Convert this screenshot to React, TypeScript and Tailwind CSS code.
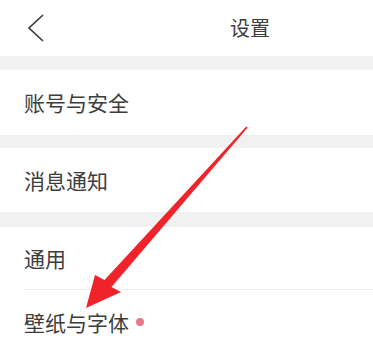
import React from "react";

const font = { fontFamily: '"Noto Sans CJK SC", "Noto Sans", sans-serif' };

function Row({ label, h, dot }: { label: string; h: string; dot?: boolean }) {
  return (
    <div className={`flex items-center bg-white pl-[24px] ${h}`}>
      <span className="text-[21px] font-normal leading-none text-[#3d3d3d]">{label}</span>
      {dot && <span className="ml-[7px] h-[8px] w-[8px] rounded-full bg-[#e8798b]" />}
    </div>
  );
}

export default function App() {
  return (
    <div className="relative h-[343px] w-[373px] overflow-hidden bg-white" style={font}>
      <div className="flex h-[56px] items-center bg-white">
        <svg className="ml-[26px]" width="20" height="30" viewBox="0 0 20 30">
          <path d="M17 2 L3 15 L17 28" fill="none" stroke="#3a3a3a" strokeWidth="1.7" />
        </svg>
        <span className="ml-auto mr-[103px] text-[20px] font-normal leading-none text-[#3d3d3d]">设置</span>
      </div>
      <div className="h-[14px] bg-[#f1f1f1]" />
      <Row label="账号与安全" h="h-[65px]" />
      <div className="h-[13px] bg-[#f1f1f1]" />
      <Row label="消息通知" h="h-[64px]" />
      <div className="h-[15px] bg-[#f1f1f1]" />
      <Row label="通用" h="h-[62px]" />
      <div className="ml-[24px] h-px bg-[#ececec]" />
      <Row label="壁纸与字体" h="h-[64px]" dot />
      <svg className="pointer-events-none absolute left-0 top-0" width="373" height="343" viewBox="0 0 373 343">
        <polygon
          points="86,308 95,275 104.5,280 246.3,126.5 247.7,127.6 111.5,287 121,292"
          fill="#f0232a"
        />
      </svg>
    </div>
  );
}
